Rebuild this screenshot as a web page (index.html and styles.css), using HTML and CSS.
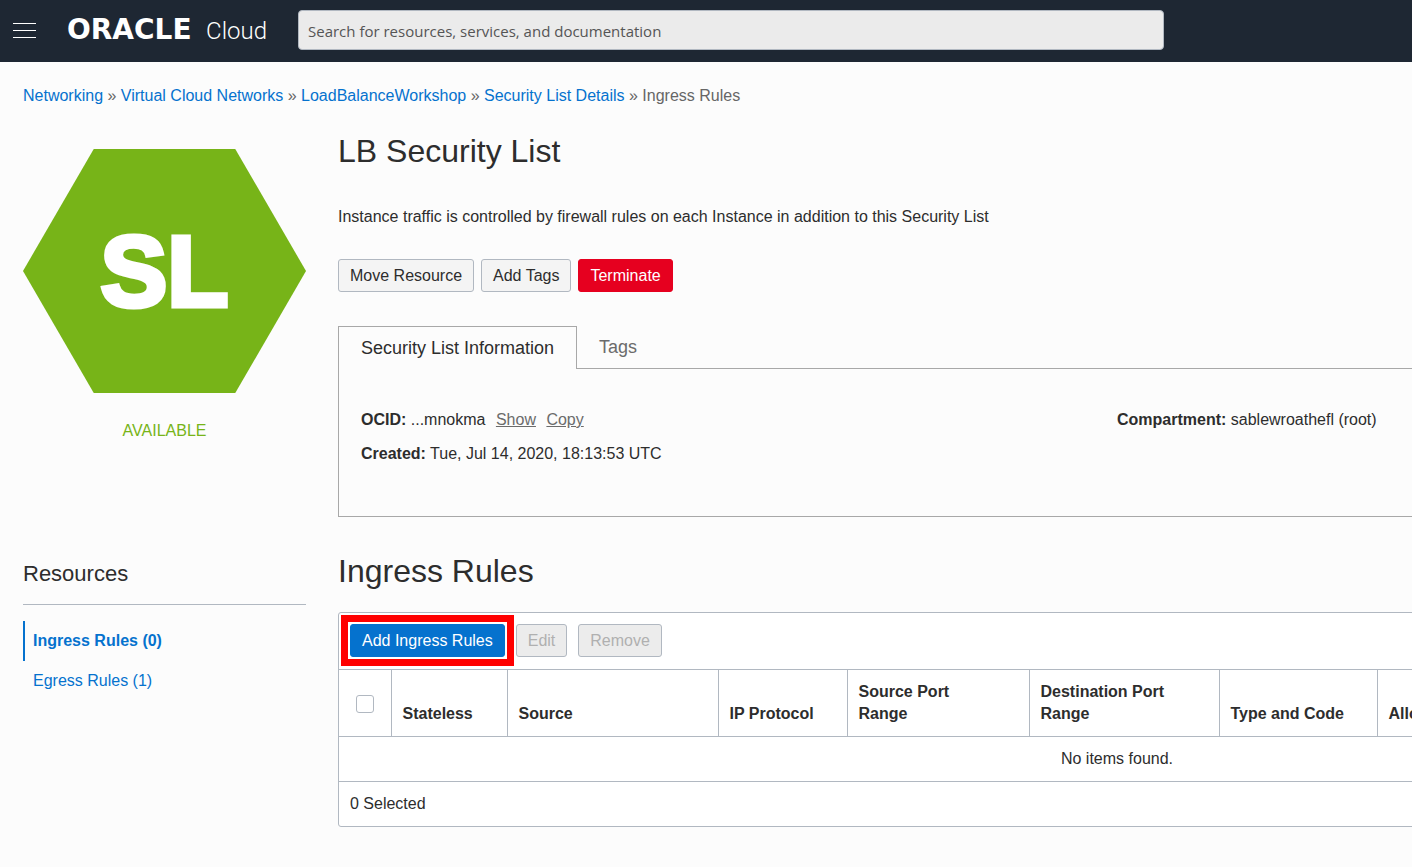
FILE: index.html
```html
<!DOCTYPE html>
<html lang="en">
<head>
<meta charset="utf-8">
<meta name="viewport" content="width=device-width, initial-scale=1">
<title>Ingress Rules - Oracle Cloud</title>
<link rel="stylesheet" href="styles.css">
</head>
<body>
<header class="topbar">
  <button class="menu" type="button" aria-label="Open navigation menu">
    <svg width="23" height="17" viewBox="0 0 23 17" aria-hidden="true"><path d="M0 1.5h23M0 8.5h23M0 15.5h23" stroke="#fff" stroke-width="1"/></svg>
  </button>
  <a class="brand" href="#"><span class="brand-name">ORACLE</span><span class="brand-product">Cloud</span></a>
  <input class="search" type="search" aria-label="Search" placeholder="Search for resources, services, and documentation">
</header>

<nav class="breadcrumb" aria-label="Breadcrumb">
  <a href="#">Networking</a> » <a href="#">Virtual Cloud Networks</a> » <a href="#">LoadBalanceWorkshop</a> » <a href="#">Security List Details</a> » <span>Ingress Rules</span>
</nav>

<div class="page">
  <aside class="side">
    <div class="status">
      <div class="hexagon">SL</div>
      <div class="state">AVAILABLE</div>
    </div>
    <h2 class="side-title">Resources</h2>
    <nav class="side-nav" aria-label="Resources">
      <a class="side-link current" href="#">Ingress Rules (0)</a>
      <a class="side-link" href="#">Egress Rules (1)</a>
    </nav>
  </aside>

  <main class="content">
    <h1 class="title">LB Security List</h1>
    <p class="description">Instance traffic is controlled by firewall rules on each Instance in addition to this Security List</p>
    <div class="actions">
      <button class="btn" type="button">Move Resource</button>
      <button class="btn" type="button">Add Tags</button>
      <button class="btn danger" type="button">Terminate</button>
    </div>

    <div class="tabs" role="tablist">
      <button class="tab selected" type="button" role="tab" aria-selected="true">Security List Information</button>
      <button class="tab" type="button" role="tab" aria-selected="false">Tags</button>
    </div>
    <section class="panel">
      <div class="facts">
        <div><b>OCID:</b> ...mnokma <a class="inline-link" href="#">Show</a> <a class="inline-link" href="#">Copy</a></div>
        <div><b>Created:</b> Tue, Jul 14, 2020, 18:13:53 UTC</div>
      </div>
      <div class="facts">
        <div><b>Compartment:</b> sablewroathefl (root)</div>
      </div>
    </section>

    <h2 class="title section-title">Ingress Rules</h2>
    <section class="grid-box">
      <div class="toolbar">
        <div class="highlighted"><button class="btn primary" type="button">Add Ingress Rules</button></div>
        <button class="btn" type="button" disabled>Edit</button>
        <button class="btn" type="button" disabled>Remove</button>
      </div>
      <table class="rules">
        <colgroup>
          <col class="col-check"><col class="col-stateless"><col class="col-source"><col class="col-protocol">
          <col class="col-sport"><col class="col-dport"><col class="col-type"><col>
        </colgroup>
        <thead>
          <tr>
            <th class="check"><input type="checkbox" aria-label="Select all rules"></th>
            <th>Stateless</th>
            <th>Source</th>
            <th>IP Protocol</th>
            <th>Source Port<br>Range</th>
            <th>Destination Port<br>Range</th>
            <th>Type and Code</th>
            <th>Allows</th>
          </tr>
        </thead>
        <tbody>
          <tr><td colspan="8">No items found.</td></tr>
        </tbody>
      </table>
      <div class="grid-footer">0 Selected</div>
    </section>
  </main>
</div>
</body>
</html>
```

FILE: styles.css
```css
* {
  box-sizing: border-box;
}

body {
  margin: 0;
  background: #fcfcfc;
  color: #2d2d2d;
  font-family: "Liberation Sans", Arial, sans-serif;
  font-size: 16px;
  line-height: 22px;
}

a {
  color: #0572ce;
  text-decoration: none;
}

button,
input {
  font: inherit;
}

.topbar {
  display: flex;
  align-items: center;
  height: 62px;
  padding: 0 13px 2px;
  background: #1e2733;
}

.menu {
  display: flex;
  padding: 0;
  border: 0;
  background: none;
}

.brand {
  display: flex;
  align-items: baseline;
  justify-content: space-between;
  flex: none;
  width: 200px;
  margin: 0 31px;
  color: #fff;
}

.brand-name {
  font: bold 28px/32px "DejaVu Sans", sans-serif;
}

.brand-product {
  font: 300 24px/32px Roboto, sans-serif;
}

.search {
  flex: 0 1 866px;
  min-width: 0;
  height: 40px;
  padding: 2px 9px 0;
  border: 1px solid #b1b8c1;
  border-radius: 4px;
  background: #ebebeb;
  color: #555;
  font: 15px "Open Sans", "Noto Sans", sans-serif;
}

.search::placeholder {
  color: #555;
  opacity: 1;
}

.breadcrumb {
  padding: 23px 23px 0;
  color: #666;
}

.page {
  display: grid;
  grid-template-columns: 283px minmax(1558px, 1fr);
  gap: 32px;
  padding: 24px 0 40px 23px;
  overflow: hidden;
}

.status {
  height: 428px;
  padding-top: 18px;
}

.hexagon {
  display: flex;
  align-items: center;
  justify-content: center;
  height: 244px;
  background: #77b418;
  clip-path: polygon(25% 0, 75% 0, 100% 50%, 75% 100%, 25% 100%, 0 50%);
  color: #fff;
  font-size: 100px;
  line-height: 1;
  font-weight: 700;
  -webkit-text-stroke: 5px #fff;
}

.state {
  margin-top: 27px;
  color: #77b418;
  text-align: center;
}

.side-title {
  margin: 0;
  padding: 1px 0 16px;
  border-bottom: 1px solid #b1b8c1;
  font-size: 22px;
  line-height: 28px;
  font-weight: 400;
}

.side-nav {
  display: grid;
  padding-top: 16px;
}

.side-link {
  padding: 9px 8px;
  border-left: 2px solid transparent;
}

.side-link.current {
  border-color: #0572ce;
  font-weight: 700;
}

.title {
  margin: 0;
  font-size: 32px;
  line-height: 40px;
  font-weight: 400;
}

.description {
  margin: 35px 0 31px;
}

.actions {
  display: flex;
  gap: 7px;
  margin-bottom: 34px;
}

.btn {
  height: 33px;
  padding: 0 11px;
  border: 1px solid #b1b8c1;
  border-radius: 3px;
  background: #f4f4f4;
  color: #2d2d2d;
}

.btn.danger {
  border-color: #e6001f;
  background: #e6001f;
  color: #fff;
}

.btn.primary {
  border-color: #0572ce;
  background: #0572ce;
  color: #fff;
}

.btn:disabled {
  background: #ececec;
  color: #b0b0b0;
}

.highlighted {
  display: flex;
  outline: 7px solid #f00;
  outline-offset: 2px;
}

.tabs {
  display: flex;
  height: 43px;
}

.tab {
  padding: 0 22px;
  border: 0;
  border-bottom: 1px solid #a8a8a8;
  background: none;
  color: #6b6b6b;
  font-size: 18px;
}

.tab.selected {
  border: 1px solid #a8a8a8;
  border-bottom: 0;
  color: #2d2d2d;
}

.tabs::after {
  content: "";
  flex: 1;
  border-bottom: 1px solid #a8a8a8;
}

.panel {
  display: grid;
  grid-template-columns: 1fr 1fr;
  min-height: 148px;
  padding: 40px 22px 0;
  border: 1px solid #a8a8a8;
  border-top: 0;
}

.facts {
  display: flex;
  flex-direction: column;
  gap: 12px;
}

.inline-link {
  margin-left: 6px;
  color: #6b6b6b;
  text-decoration: underline;
}

.section-title {
  margin: 34px 0 21px;
}

.grid-box {
  border: 1px solid #b1b8c1;
  border-radius: 3px;
  background: #fff;
}

.toolbar {
  display: flex;
  gap: 11px;
  padding: 11px 11px 12px;
}

.rules {
  width: 100%;
  table-layout: fixed;
  border-collapse: collapse;
}

.col-check { width: 52px; }
.col-stateless { width: 116px; }
.col-source { width: 211px; }
.col-protocol { width: 129px; }
.col-sport { width: 182px; }
.col-dport { width: 190px; }
.col-type { width: 158px; }

.rules th {
  height: 67px;
  padding: 11px;
  border: solid #b1b8c1;
  border-width: 1px 0 1px 1px;
  text-align: left;
  vertical-align: bottom;
}

.rules th:first-child {
  border-left: 0;
}

.rules .check {
  padding: 0;
  text-align: center;
  vertical-align: middle;
}

.check input {
  appearance: none;
  width: 18px;
  height: 18px;
  margin: 0;
  border: 1px solid #b1b8c1;
  border-radius: 3px;
  background: #fff;
  vertical-align: middle;
}

.rules td {
  height: 45px;
  padding: 0 11px;
  border-bottom: 1px solid #b1b8c1;
  text-align: center;
}

.grid-footer {
  padding: 11px;
}
```
